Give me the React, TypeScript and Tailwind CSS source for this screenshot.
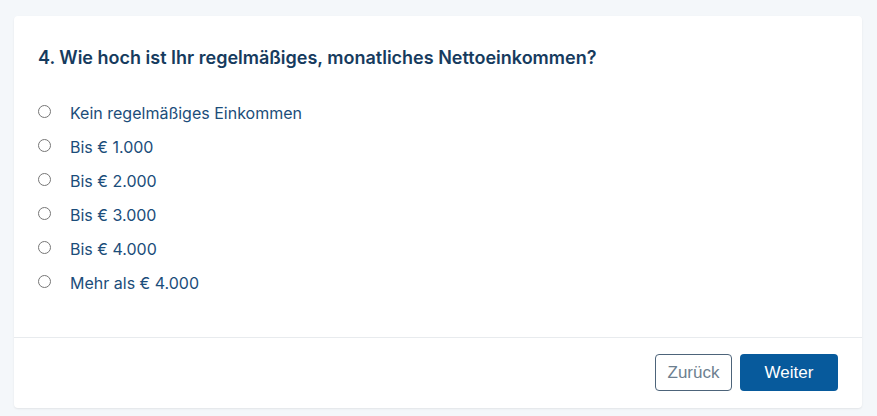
const options = [
  "Kein regelmäßiges Einkommen",
  "Bis € 1.000",
  "Bis € 2.000",
  "Bis € 3.000",
  "Bis € 4.000",
  "Mehr als € 4.000",
];

export default function App() {
  return (
    <div className="min-h-screen w-full bg-[#f4f7fa] pt-4 pl-[14px] pr-[15px] font-['Inter',sans-serif]">
      <div className="rounded bg-white shadow-[0_1px_2px_rgba(0,0,0,0.08)]">
        {/* Question */}
        <div className="px-6 pt-[30px] pb-[42px]">
          <h2 className="text-[18px] font-semibold leading-6 text-[#163b5e]">
            4. Wie hoch ist Ihr regelmäßiges, monatliches Nettoeinkommen?
          </h2>
          <div className="mt-[31px] flex flex-col gap-[10px]">
            {options.map((o) => (
              <label key={o} className="flex h-6 items-center gap-[19px] text-base text-[#1b4d7a]">
                <input type="radio" name="income" className="m-0 h-[13px] w-[13px] -translate-y-[2px]" />
                <span>{o}</span>
              </label>
            ))}
          </div>
        </div>

        {/* Footer */}
        <div className="flex justify-end gap-2 border-t border-[#e8ebee] px-6 pt-4 pb-[17px]">
          <button className="h-[37px] w-[77px] rounded border border-[#4d647a] bg-white font-['Liberation_Sans',sans-serif] text-[17px] text-[#6d7f90]">
            Zurück
          </button>
          <button className="h-[37px] w-[98px] rounded bg-[#075a9c] font-['Liberation_Sans',sans-serif] text-[17px] text-white">
            Weiter
          </button>
        </div>
      </div>
    </div>
  );
}
